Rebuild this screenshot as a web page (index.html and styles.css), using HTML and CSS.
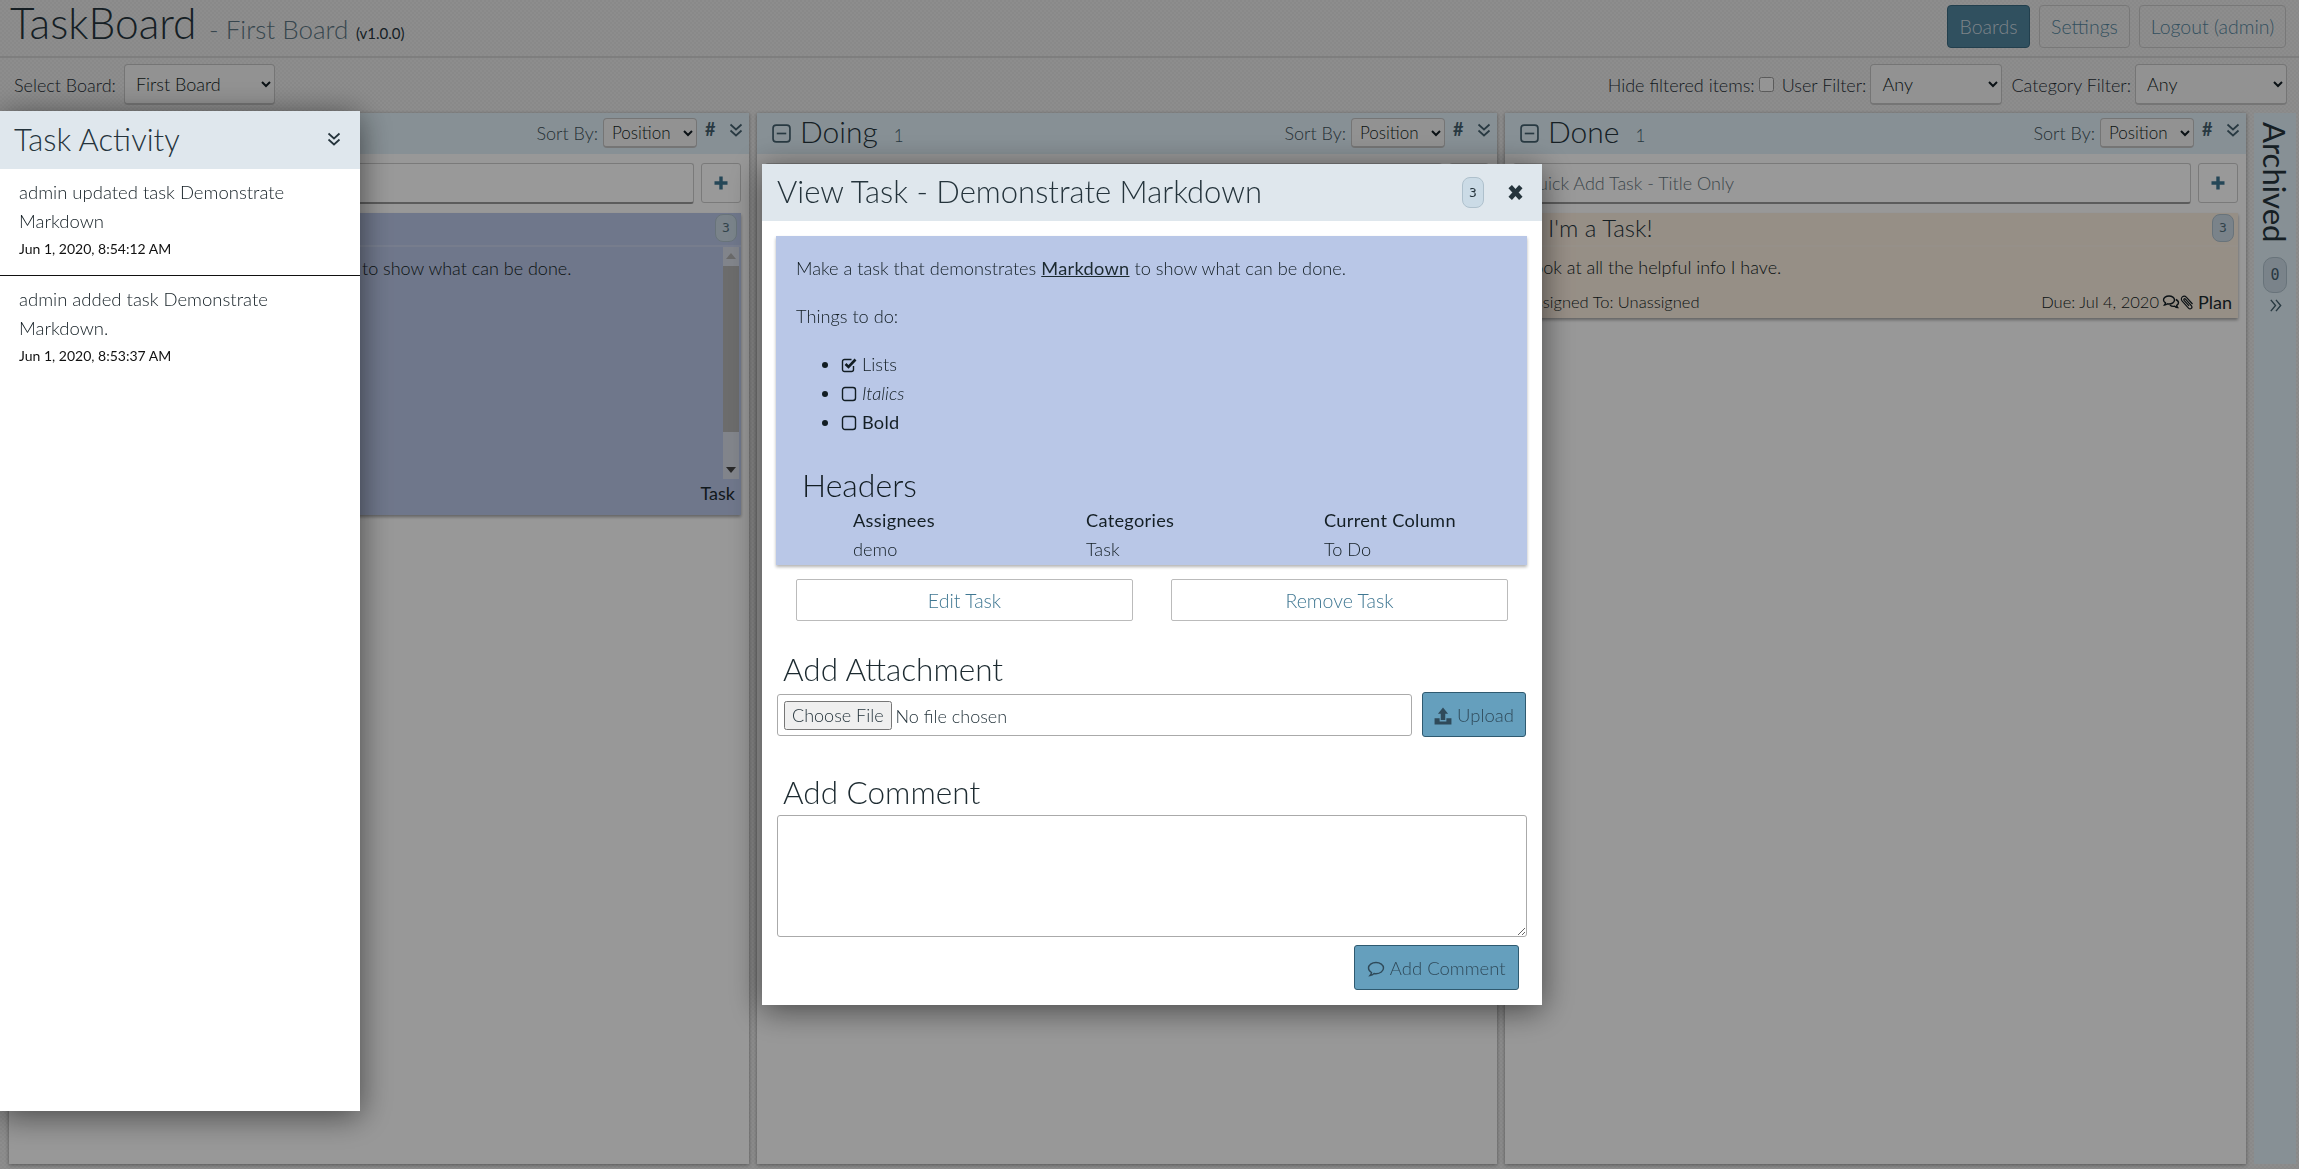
FILE: index.html
```html
<!DOCTYPE html>
<html lang="en">
<head>
  <meta charset="UTF-8">
  <title>TaskBoard</title>
  <link rel="stylesheet" href="styles.css">
</head>
<body>
  <svg class="icon-defs" aria-hidden="true">
    <symbol id="i-double-down" viewBox="0 0 16 16"><path d="M2.5 2.5 8 7.5l5.5-5M2.5 8.5 8 13.5l5.5-5" fill="none" stroke="currentColor" stroke-width="1.7"/></symbol>
    <symbol id="i-double-right" viewBox="0 0 16 16"><path d="M3 2l5 6-5 6M8.5 2l5 6-5 6" fill="none" stroke="currentColor" stroke-width="1.5"/></symbol>
    <symbol id="i-minus-square" viewBox="0 0 18 18"><rect x="1" y="1" width="16" height="16" rx="3" fill="none" stroke="currentColor" stroke-width="1.6"/><path d="M4.5 9h9" stroke="currentColor" stroke-width="1.6"/></symbol>
    <symbol id="i-plus" viewBox="0 0 16 16"><path d="M8 1.500v13M1.500 8h13" stroke="currentColor" stroke-width="3.400"/></symbol>
    <symbol id="i-close" viewBox="0 0 16 16"><path d="M3 2.500l10 11M13 2.500 3 13.500" stroke="currentColor" stroke-width="4.400"/></symbol>
    <symbol id="i-upload" viewBox="0 0 16 16"><path d="M8 .5l4.500 5.500H10v5.500H6V6H3.500zM.5 10h4.500v2.800h6V10h4.500v5.500H.5z" fill="currentColor"/></symbol>
    <symbol id="i-comment" viewBox="0 0 18 16"><path d="M9 1.500c4.200 0 7.500 2.500 7.500 5.600S13.200 12.700 9 12.700c-.7 0-1.300 0-1.900-.2-1 1-2.300 1.800-4.100 2 .9-1 1.400-1.900 1.500-3C2.700 10.500 1.500 8.900 1.500 7.100 1.500 4 4.800 1.500 9 1.500z" fill="none" stroke="currentColor" stroke-width="1.400"/></symbol>
    <symbol id="i-comments" viewBox="0 0 18 16"><path d="M7 2c3 0 5.500 1.800 5.500 4S10 10 7 10c-.6 0-1 0-1.500-.2C4.600 10.500 3.600 11 2.500 11c.6-.7 1-1.400 1-2.200C2.200 8 1.500 7.100 1.500 6 1.500 3.800 4 2 7 2z" fill="none" stroke="currentColor" stroke-width="1.400"/><path d="M13.800 5.500c1.700.7 2.700 1.900 2.700 3.300 0 1-.6 1.900-1.800 2.600.1.900.5 1.600 1 2.200-1.100 0-2.200-.5-3-1.300-2 .3-3.700-.2-4.800-1.300" fill="none" stroke="currentColor" stroke-width="1.400"/></symbol>
    <symbol id="i-clip" viewBox="0 0 16 16"><path d="M13.500 10 7.500 3.300C6.300 2 4.500 1.800 3.300 2.900S2 5.900 3.200 7.200l6.300 6.900c.8.900 2 1 2.800.3s.7-1.900 0-2.800L6.500 5.200c-.4-.5-1-.5-1.400-.2s-.4.900 0 1.400l5 5.500" fill="none" stroke="currentColor" stroke-width="1.200"/></symbol>
    <symbol id="i-check-square" viewBox="0 0 16 16"><path d="M12.500 9v3.500a2 2 0 0 1-2 2h-7a2 2 0 0 1-2-2v-8a2 2 0 0 1 2-2h7" fill="none" stroke="currentColor" stroke-width="1.400"/><path d="M4.500 7 7.500 10 14.500 2.500" fill="none" stroke="currentColor" stroke-width="2.600"/></symbol>
    <symbol id="i-square" viewBox="0 0 16 16"><rect x="1.500" y="1.500" width="13" height="13" rx="2.500" fill="none" stroke="currentColor" stroke-width="1.400"/></symbol>
  </svg>

  <header class="app-header">
    <h1 class="brand">TaskBoard <span class="brand-board">- First Board</span> <span class="brand-version">(v1.0.0)</span></h1>
    <nav class="main-nav">
      <a class="nav-btn active">Boards</a>
      <a class="nav-btn settings">Settings</a>
      <a class="nav-btn logout">Logout (admin)</a>
    </nav>
  </header>

  <div class="toolbar">
    <label class="tool-board">Select Board:
      <select class="select board-select"><option>First Board</option></select>
    </label>
    <div class="filters">
      <label>Hide filtered items:</label>
      <input class="filter-check" type="checkbox">
      <label>User Filter:</label>
      <select class="select user-select"><option>Any</option></select>
      <label>Category Filter:</label>
      <select class="select cat-select"><option>Any</option></select>
    </div>
  </div>

  <main class="board">
    <section class="column">
      <div class="col-head">
        <div class="col-tools">
          <label>Sort By:</label>
          <select class="select sort-select"><option>Position</option></select>
          <span class="hash">#</span>
          <svg class="col-collapse"><use href="#i-double-down"/></svg>
        </div>
      </div>
      <div class="col-body">
        <div class="quick-add">
          <input type="text">
          <button class="add-btn"><svg><use href="#i-plus"/></svg></button>
        </div>
        <article class="task task-blue">
          <div class="task-title"><span></span><span class="badge">3</span></div>
          <div class="task-scroll">
            <div class="task-text covered">to show what can be done.</div>
            <div class="scrollbar"><i class="arrow-up"></i><b></b><i class="arrow-down"></i></div>
          </div>
          <div class="task-foot"><span></span><span class="task-cat">Task</span></div>
        </article>
      </div>
    </section>

    <section class="column">
      <div class="col-head">
        <svg class="col-toggle"><use href="#i-minus-square"/></svg>
        <h2>Doing</h2><span class="col-count">1</span>
        <div class="col-tools">
          <label>Sort By:</label>
          <select class="select sort-select"><option>Position</option></select>
          <span class="hash">#</span>
          <svg class="col-collapse"><use href="#i-double-down"/></svg>
        </div>
      </div>
      <div class="col-body">
        <div class="quick-add">
          <input type="text">
          <button class="add-btn"><svg><use href="#i-plus"/></svg></button>
        </div>
      </div>
    </section>

    <section class="column">
      <div class="col-head">
        <svg class="col-toggle"><use href="#i-minus-square"/></svg>
        <h2>Done</h2><span class="col-count">1</span>
        <div class="col-tools">
          <label>Sort By:</label>
          <select class="select sort-select"><option>Position</option></select>
          <span class="hash">#</span>
          <svg class="col-collapse"><use href="#i-double-down"/></svg>
        </div>
      </div>
      <div class="col-body">
        <div class="quick-add">
          <input type="text" placeholder="Quick Add Task - Title Only">
          <button class="add-btn"><svg><use href="#i-plus"/></svg></button>
        </div>
        <article class="task task-tan">
          <div class="task-title"><span>I'm a Task!</span><span class="badge">3</span></div>
          <div class="task-text">Look at all the helpful info I have.</div>
          <div class="task-foot">
            <span>Assigned To: Unassigned</span>
            <span class="task-meta">Due: Jul 4, 2020
              <svg class="meta-icon"><use href="#i-comments"/></svg><svg class="meta-icon clip"><use href="#i-clip"/></svg>
              <span class="task-cat">Plan</span>
            </span>
          </div>
        </article>
      </div>
    </section>

    <aside class="archived">
      <span class="archived-title">Archived</span>
      <span class="archived-count">0</span>
      <svg class="archived-open"><use href="#i-double-right"/></svg>
    </aside>
  </main>

  <div class="overlay"></div>

  <aside class="activity">
    <div class="activity-head">
      <h2>Task Activity</h2>
      <svg class="activity-close"><use href="#i-double-down"/></svg>
    </div>
    <div class="activity-item">
      <p>admin updated task Demonstrate Markdown</p>
      <time>Jun 1, 2020, 8:54:12 AM</time>
    </div>
    <div class="activity-item">
      <p>admin added task Demonstrate Markdown.</p>
      <time>Jun 1, 2020, 8:53:37 AM</time>
    </div>
  </aside>

  <div class="modal">
    <div class="modal-head">
      <h2>View Task - Demonstrate Markdown</h2>
      <span class="badge modal-badge">3</span>
      <svg class="modal-close"><use href="#i-close"/></svg>
    </div>
    <div class="modal-task">
      <p>Make a task that demonstrates <a>Markdown</a> to show what can be done.</p>
      <p>Things to do:</p>
      <ul>
        <li><svg class="todo"><use href="#i-check-square"/></svg> Lists</li>
        <li><svg class="todo"><use href="#i-square"/></svg> <em>Italics</em></li>
        <li><svg class="todo"><use href="#i-square"/></svg> <strong>Bold</strong></li>
      </ul>
      <h2>Headers</h2>
      <div class="detail-grid">
        <strong>Assignees</strong><strong>Categories</strong><strong>Current Column</strong>
        <span>demo</span><span>Task</span><span>To Do</span>
      </div>
    </div>
    <div class="modal-actions">
      <button class="plain-btn">Edit Task</button>
      <button class="plain-btn">Remove Task</button>
    </div>
    <h3 class="attach-title">Add Attachment</h3>
    <div class="attach-row">
      <input class="file-input" type="file">
      <button class="blue-btn upload-btn"><svg class="btn-icon"><use href="#i-upload"/></svg> Upload</button>
    </div>
    <h3 class="comment-title">Add Comment</h3>
    <textarea class="comment-box"></textarea>
    <div class="comment-actions">
      <button class="blue-btn comment-btn"><svg class="btn-icon"><use href="#i-comment"/></svg> Add Comment</button>
    </div>
  </div>
</body>
</html>
```

FILE: styles.css
```css
/* General Reset */
* {
  margin: 0;
  padding: 0;
  box-sizing: border-box;
}

body {
  height: 100vh;
  overflow: hidden;
  font-family: 'Lato', 'Liberation Sans', sans-serif;
  font-size: 18px;
  font-weight: 300;
  color: #121d23;
  background: repeating-conic-gradient(#ececec 0 25%, #e5e5e5 0 50%) 0 0 / 4px 4px;
}

.icon-defs {
  display: none;
}

h1, h2, h3 {
  font-weight: 300;
}

.select {
  height: 41px;
  font-family: inherit;
  font-size: 18px;
  font-weight: 300;
  color: #121d23;
  background: #f4f4f4;
  border: 1px solid #c4c4c4;
  border-bottom-width: 2px;
  border-radius: 4px;
  padding-left: 7px;
}

/* Header */
.app-header {
  height: 58px;
  display: flex;
  justify-content: space-between;
  padding: 0 13px 0 10px;
  border-bottom: 2px solid #d2d2d2;
}

.brand {
  font-size: 42.500px;
  line-height: 45px;
  color: #25343c;
  white-space: nowrap;
}

.brand-board {
  font-size: 26px;
  margin-left: 1px;
  color: #5d7683;
}

.brand-version {
  margin-left: -4px;
  font-size: 15px;
  font-weight: 400;
  color: #25343c;
}

.main-nav {
  display: flex;
  gap: 9px;
  padding-top: 5px;
}

.nav-btn {
  height: 43px;
  display: flex;
  align-items: center;
  justify-content: center;
  font-size: 19.500px;
  color: #55859e;
  border: 1px solid #c8c8c8;
  border-radius: 4px;
}

.nav-btn.active {
  width: 83px;
  color: #cfdbe2;
  background: #50859f;
  border-color: #3a6a80;
}

.nav-btn.settings {
  width: 91px;
}

.nav-btn.logout {
  width: 147px;
}

/* Toolbar */
.toolbar {
  height: 53px;
  display: flex;
  justify-content: space-between;
  padding: 6px 12px 0 14px;
}

.tool-board {
  display: flex;
  align-items: center;
  gap: 8px;
  height: 41px;
  color: #1f2e36;
}

.board-select {
  width: 151px;
}

.filters {
  display: flex;
  align-items: center;
  height: 41px;
  color: #1f2e36;
}

.filter-check {
  width: 15px;
  height: 15px;
  margin: 0 8px 0 4px;
  opacity: .7;
}

.user-select {
  width: 132px;
  margin: 0 9px 0 4px;
}

.cat-select {
  width: 152px;
  margin-left: 4px;
}

/* Columns */
.board {
  height: 1053px;
  display: grid;
  grid-template-columns: 740px 740px 741px 42px;
  gap: 8px;
  padding: 2px 0 0 9px;
}

.column {
  height: 1051px;
  background: #fefefe;
  box-shadow: 0 1px 4px rgba(0, 0, 0, .4);
}

.col-head {
  height: 41px;
  display: flex;
  align-items: center;
  padding: 0 5px 0 15px;
  background: #e1f0f8;
}

.col-toggle {
  width: 19px;
  height: 19px;
  color: #44606e;
}

.col-head h2 {
  font-size: 30px;
  line-height: 36px;
  height: 41px;
  margin-left: 9px;
  color: #25343c;
}

.col-count {
  font-size: 17px;
  margin: 4px 0 0 16px;
  color: #44606e;
}

.col-tools {
  margin: -2px 0 0 auto;
  display: flex;
  align-items: center;
  color: #3f5058;
}

.sort-select {
  width: 94px;
  height: 30px;
  margin-left: 5px;
  padding-left: 4px;
  font-size: 17px;
}

.hash {
  width: 14px;
  margin: -8px 9px 0 8px;
  font-weight: 700;
  font-size: 18px;
  color: #44606e;
}

.col-collapse {
  width: 16px;
  height: 16px;
  margin-top: -6px;
  color: #44606e;
}

.col-body {
  padding: 9px 8px;
}

.quick-add {
  display: flex;
  gap: 7px;
  margin-bottom: 9px;
}

.quick-add input {
  flex: 1;
  height: 41px;
  padding: 0 10px;
  font-family: inherit;
  font-size: 18px;
  font-weight: 300;
  background: #fff;
  border: 1px solid #ccc;
  border-bottom: 2px solid #999;
  border-radius: 3px;
}

.quick-add input::placeholder {
  color: #66757d;
}

.add-btn {
  width: 40px;
  height: 40px;
  color: #3f7792;
  background: #fff;
  border: 1px solid #ccc;
  border-radius: 3px;
}

.add-btn svg {
  width: 16px;
  height: 16px;
  margin-top: 3px;
}

/* Tasks */
.task {
  box-shadow: 0 2px 3px rgba(0, 0, 0, .35);
}

.task-blue {
  height: 302px;
  background: #bac7e8;
}

.task-tan {
  height: 105px;
  background: #fbeee0;
}

.task-title {
  height: 34px;
  padding: 0 4px 2px 35px;
  display: flex;
  align-items: center;
  justify-content: space-between;
  font-size: 24px;
  line-height: 28px;
  border-bottom: 2px solid rgba(255, 255, 255, .18);
  color: #25343c;
}

.badge {
  width: 22px;
  height: 28px;
  display: flex;
  align-items: center;
  justify-content: center;
  font-family: 'DejaVu Sans Mono', monospace;
  font-size: 13px;
  color: #55707e;
  background: #cbdbe6;
  border: 1px solid #aec0cc;
  border-radius: 8px;
}

.task-scroll {
  height: 232px;
  display: flex;
}

.task-text {
  flex: 1;
  padding: 7px 7px 0;
  line-height: 28.800px;
  white-space: nowrap;
}

.task-text.covered {
  padding-left: 345px;
}

.scrollbar {
  width: 16px;
  display: flex;
  flex-direction: column;
  align-items: center;
  justify-content: space-between;
  margin-right: 2px;
  background: #d8dde8;
}

.scrollbar b {
  flex: 1;
  width: 100%;
  margin: 1px 0 29px;
  background: #b4b4b4;
}

.arrow-up,
.arrow-down {
  margin: 6px 0;
  border-left: 5px solid transparent;
  border-right: 5px solid transparent;
}

.arrow-up {
  border-bottom: 6px solid #b0b0b0;
}

.arrow-down {
  border-top: 6px solid #444;
}

.task-foot {
  display: flex;
  justify-content: space-between;
  padding: 0 6px 0 12px;
  font-size: 16.500px;
  line-height: 28px;
}

.task-tan .task-text {
  height: 41px;
  line-height: 41px;
  padding: 0 12px;
}

.task-meta {
  display: flex;
  align-items: center;
  white-space: nowrap;
}

.meta-icon {
  width: 18px;
  height: 16px;
  margin-left: 3px;
}

.meta-icon.clip {
  width: 16px;
  margin-left: -1px;
}

.task-cat {
  margin-left: 3px;
  font-size: 18px;
  font-weight: 400;
  color: #1c2a30;
}

/* Archived */
.archived {
  height: 1051px;
  display: flex;
  flex-direction: column;
  align-items: center;
  padding-top: 9px;
  background: #e1f0f8;
}

.archived-title {
  writing-mode: vertical-rl;
  font-size: 31px;
  font-weight: 400;
  line-height: 30px;
  color: #25343c;
}

.archived-count {
  width: 24px;
  height: 36px;
  margin-top: 15px;
  display: flex;
  align-items: center;
  justify-content: center;
  font-family: 'DejaVu Sans Mono', monospace;
  font-size: 15px;
  color: #44606e;
  background: #cbdbe6;
  border: 1px solid #aec0cc;
  border-radius: 10px;
}

.archived-open {
  width: 15px;
  height: 15px;
  margin-top: 5px;
  color: #44606e;
}

/* Overlay, modal and activity panel */
.overlay {
  position: fixed;
  inset: 0;
  background: rgba(0, 0, 0, .4);
}

.activity {
  position: fixed;
  top: 111px;
  left: 0;
  width: 360px;
  height: 1000px;
  background: #fff;
  box-shadow: 0 5px 30px rgba(0, 0, 0, .55);
}

.activity-head {
  height: 58px;
  display: flex;
  align-items: center;
  justify-content: space-between;
  padding: 0 18px 2px 14px;
  background: #dfe7ed;
}

.activity-head h2 {
  font-size: 31px;
  color: #25343c;
}

.activity-close {
  width: 16px;
  height: 16px;
  color: #25343c;
}

.activity-item {
  padding: 9px 19px 13px;
  font-size: 18.500px;
  border-bottom: 1px solid #111;
  color: #121d23;
}

.activity-item + .activity-item {
  border-bottom: none;
}

.activity-item p {
  line-height: 29px;
}

.activity-item time {
  display: block;
  font-size: 14px;
  font-weight: 400;
  line-height: 26px;
  color: #111;
}

.modal {
  position: fixed;
  top: 164px;
  left: 762px;
  width: 780px;
  height: 841px;
  background: #fff;
  box-shadow: 0 5px 30px rgba(0, 0, 0, .55);
}

.modal-head {
  height: 57px;
  display: flex;
  align-items: center;
  padding: 0 18px 0 15px;
  background: #dfe7ed;
}

.modal-head h2 {
  flex: 1;
  margin-top: -4px;
  font-size: 31px;
  color: #25343c;
}

.modal-badge {
  height: 31px;
  color: #25343c;
  margin-right: 23px;
}

.modal-close {
  width: 17px;
  height: 17px;
  color: #25343c;
}

.modal-task {
  height: 329px;
  margin: 15px 15px 0 14px;
  padding: 18px 20px 0;
  overflow: hidden;
  font-size: 18.200px;
  line-height: 28.800px;
  color: #121d23;
  background: #b9c7e7;
  box-shadow: 0 2px 3px rgba(0, 0, 0, .3);
}

.modal-task p {
  margin-bottom: 19.200px;
}

.modal-task a {
  font-weight: 400;
  letter-spacing: .3px;
  color: #1c2a30;
  text-decoration: underline;
}

.modal-task ul {
  padding-left: 45px;
}

.modal-task strong {
  font-weight: 400;
  letter-spacing: .3px;
  color: #141f25;
}

.todo {
  width: 16px;
  height: 16px;
  vertical-align: -2px;
}

.modal-task h2 {
  margin: 30px 0 2px 6px;
  font-size: 32px;
  line-height: 38px;
}

.detail-grid {
  display: grid;
  grid-template-columns: 233px 238px 1fr;
  padding-left: 57px;
}

.modal-actions {
  display: flex;
  justify-content: space-between;
  margin-top: 14px;
  padding: 0 34px;
}

.plain-btn {
  width: 337px;
  height: 42px;
  font-family: inherit;
  font-size: 19.500px;
  font-weight: 300;
  color: #3f7792;
  background: #fff;
  border: 1px solid #bbb;
  border-radius: 2px;
}

.attach-title,
.comment-title {
  margin-left: 21px;
  font-size: 31.500px;
  line-height: 34px;
  color: #1c2a30;
}

.attach-title {
  margin-top: 31px;
}

.comment-title {
  margin-top: 38px;
}

.attach-row {
  display: flex;
  align-items: center;
  justify-content: space-between;
  margin: 6px 16px 0 15px;
}

.file-input {
  width: 635px;
  height: 42px;
  padding: 6px;
  font-family: inherit;
  font-size: 18px;
  font-weight: 300;
  border: 1px solid #aaa;
  border-radius: 3px;
  color: #25343c;
}

.file-input::file-selector-button {
  height: 29px;
  font-family: inherit;
  font-size: 18px;
  font-weight: 300;
  color: #25343c;
}

.blue-btn {
  height: 45px;
  font-family: inherit;
  font-size: 18.500px;
  font-weight: 300;
  color: #2f4a5a;
  background: #659fbd;
  border: 1px solid #2f5a70;
  border-radius: 3px;
}

.upload-btn {
  width: 104px;
}

.btn-icon {
  width: 18px;
  height: 18px;
  vertical-align: -3px;
}

.comment-box {
  display: block;
  width: 750px;
  height: 122px;
  margin: 6px 0 0 15px;
  border: 1px solid #aaa;
  border-radius: 3px;
}

.comment-actions {
  display: flex;
  justify-content: flex-end;
  margin: 8px 23px 0 0;
}

.comment-btn {
  width: 165px;
}
```
